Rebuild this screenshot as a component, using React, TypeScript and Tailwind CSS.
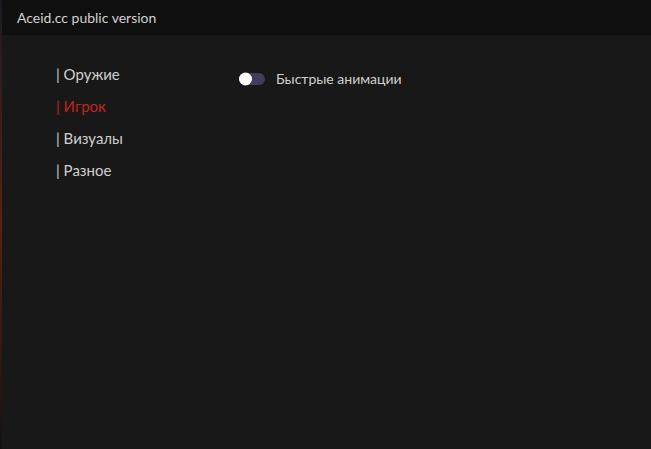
import { useState } from "react";

const tabs = ["Оружие", "Игрок", "Визуалы", "Разное"];

export default function App() {
  const [active, setActive] = useState(1);
  const [fast, setFast] = useState(false);

  return (
    <div className="flex h-[449px] w-[651px] bg-[#181818] font-['Lato',sans-serif]">
      {/* game behind the window */}
      <div className="w-[2px] shrink-0 bg-gradient-to-b from-[#1a1a22] via-[#5a1f10] to-[#121212]" />

      <div className="flex flex-1 flex-col">
        {/* Title bar */}
        <div className="flex h-[35px] items-center bg-[#0f0f0f] pl-[15px] text-[14px] text-[#d2d2d2]">
          Aceid.cc public version
        </div>

        <div className="flex flex-1">
          {/* Tabs */}
          <div className="flex w-[237px] flex-col pl-[54px] pt-[23px]">
            {tabs.map((t, i) => (
              <button
                key={t}
                onClick={() => setActive(i)}
                className={
                  "h-[32px] text-left text-[15px] leading-[20px] " +
                  (active === i ? "text-[#c42222]" : "text-[#cfcfcf]")
                }
              >
                | {t}
              </button>
            ))}
          </div>

          {/* Settings */}
          <div className="flex flex-col pt-[33px]">
            <label className="flex cursor-pointer items-center gap-[11px] text-[14px] text-[#d0d0d0]">
              <button
                onClick={() => setFast(!fast)}
                className="relative h-[12px] w-[26px] rounded-full bg-[#3e3d5a]"
              >
                <span
                  className={
                    "absolute top-1/2 h-[13px] w-[13px] -translate-y-1/2 rounded-full bg-white " +
                    (fast ? "left-[13px]" : "left-0")
                  }
                />
              </button>
              Быстрые анимации
            </label>
          </div>
        </div>
      </div>
    </div>
  );
}
